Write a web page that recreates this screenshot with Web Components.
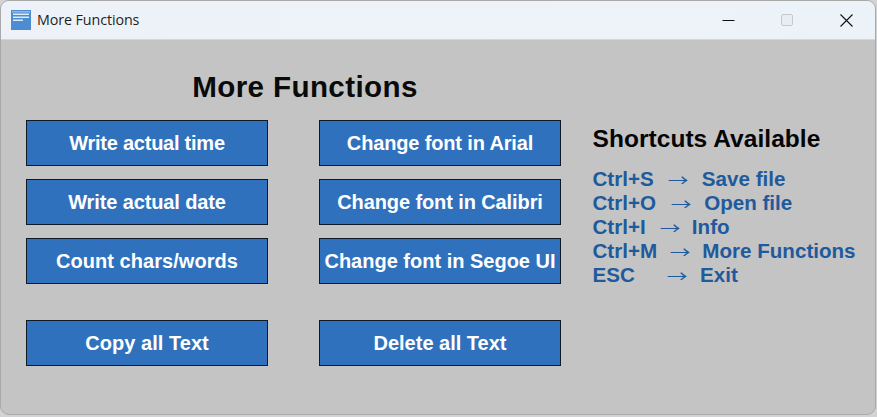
<!DOCTYPE html>
<html>
<head>
<meta charset="utf-8">
<title>More Functions</title>
<style>
    html, body { margin: 0; padding: 0; width: 877px; height: 417px; overflow: hidden; background: #d2d3d4; }
</style>
</head>
<body>
<app-window>
    <title-bar slot="bar" caption="More Functions"></title-bar>
    <functions-panel></functions-panel>
    <shortcuts-panel></shortcuts-panel>
</app-window>

<script>
// Outer window frame: title bar on top, content below
class AppWindow extends HTMLElement {
    constructor() {
        super();
        this.attachShadow({ mode: 'open' });
        this.shadowRoot.innerHTML = `
            <style>
                :host {
                    display: flex;
                    flex-direction: column;
                    box-sizing: border-box;
                    width: 876px;
                    height: 415px;
                    border: 1px solid #a9a9a9;
                    border-radius: 9px;
                    overflow: hidden;
                    background: #c4c4c4;
                }
                .content {
                    flex: 1;
                    display: flex;
                    padding: 29px 0 0 25px;
                    gap: 31.5px;
                }
            </style>
            <slot name="bar"></slot>
            <div class="content"><slot></slot></div>
        `;
    }
}

class TitleBar extends HTMLElement {
    constructor() {
        super();
        this.attachShadow({ mode: 'open' });
    }

    connectedCallback() {
        this.shadowRoot.innerHTML = `
            <style>
                :host {
                    display: flex;
                    align-items: center;
                    height: 38px;
                    flex: none;
                    background: linear-gradient(90deg, #eef2f8, #ecf3f8);
                    border-bottom: 1px solid #d4d6d8;
                    padding-left: 10px;
                    font: 14.3px "Open Sans", "Noto Sans", sans-serif;
                    color: #1f1f1f;
                }
                .icon { width: 20px; height: 20px; margin-right: 6px; margin-top: -1px; }
                .caption { flex: 1; margin-top: -1px; letter-spacing: -0.1px; }
                .controls { display: flex; height: 100%; margin-right: -1px; }
                .controls div { width: 59px; display: flex; align-items: center; justify-content: center; }
                .controls svg { width: 13px; height: 13px; }
            </style>
            <svg class="icon" viewBox="0 0 20 20">
                <rect width="20" height="20" fill="#4c8cd0"/>
                <rect x="1" y="1" width="18" height="1.5" fill="#8db8e4"/>
                <rect x="2" y="3.5" width="16" height="1.5" fill="#dce9f6"/>
                <rect x="2" y="6.5" width="16" height="1.5" fill="#dce9f6"/>
                <rect x="2" y="9.5" width="10" height="1.5" fill="#dce9f6"/>
            </svg>
            <span class="caption">${this.getAttribute('caption')}</span>
            <div class="controls">
                <div><svg viewBox="0 0 13 13"><path d="M0.5 6.5H12.5" stroke="#111" stroke-width="1"/></svg></div>
                <div><svg viewBox="0 0 13 13"><rect x="0.5" y="0.5" width="11" height="11" rx="1.5" fill="#e8edf2" stroke="#c6c9cc"/></svg></div>
                <div><svg viewBox="0 0 13 13"><path d="M0.5 0.5L12.5 12.5M12.5 0.5L0.5 12.5" stroke="#111" stroke-width="1.1"/></svg></div>
            </div>
        `;
    }
}

// One blue action button
class ActionButton extends HTMLElement {
    constructor() {
        super();
        this.attachShadow({ mode: 'open' });
        this.shadowRoot.innerHTML = `
            <style>
                :host {
                    display: flex;
                    align-items: center;
                    justify-content: center;
                    box-sizing: border-box;
                    width: 242px;
                    height: 46px;
                    background: #2f71bd;
                    border: 1px solid #0f1a26;
                    color: #fff;
                    font: bold 20px "Liberation Sans", Arial, sans-serif;
                    white-space: nowrap;
                }
            </style>
            <slot></slot>
        `;
    }
}

class FunctionsPanel extends HTMLElement {
    constructor() {
        super();
        this.attachShadow({ mode: 'open' });
        // label and letter spacing
        const labels = [
            ['Write actual time', -0.24], ['Change font in Arial', -0.15],
            ['Write actual date', -0.12], ['Change font in Calibri', -0.1],
            ['Count chars/words', 0.05], ['Change font in Segoe UI', 0],
            ['Copy all Text', 0.05], ['Delete all Text', 0]
        ];
        this.shadowRoot.innerHTML = `
            <style>
                :host { display: block; flex: none; width: 535px; }
                h1 {
                    margin: 0 0 15px;
                    padding-left: 23px;
                    height: 36px;
                    text-align: center;
                    font: bold 29.6px/35px "Liberation Sans", Arial, sans-serif;
                    letter-spacing: 0.38px;
                    color: #0a0a0a;
                }
                .grid {
                    display: grid;
                    grid-template-columns: 242px 242px;
                    column-gap: 51px;
                    grid-template-rows: 46px 46px 46px 46px;
                    row-gap: 13px;
                }
                action-button:nth-child(n+7) { margin-top: 23px; }
            </style>
            <h1>More Functions</h1>
            <div class="grid">
                ${labels.map(l => `<action-button style="letter-spacing:${l[1]}px">${l[0]}</action-button>`).join('')}
            </div>
        `;
    }
}

// Right hand list of keyboard shortcuts
class ShortcutsPanel extends HTMLElement {
    constructor() {
        super();
        this.attachShadow({ mode: 'open' });
        const rows = [
            ['Ctrl+S', 'Save file', 15.8, 16.3],
            ['Ctrl+O', 'Open file', 16.8, 15.3],
            ['Ctrl+I', 'Info', 15.8, 14.3],
            ['Ctrl+M', 'More Functions', 14.8, 14.3],
            ['ESC', 'Exit', 33.8, 15.3]
        ];
        this.shadowRoot.innerHTML = `
            <style>
                :host { display: block; font-family: "Liberation Sans", Arial, sans-serif; font-weight: bold; }
                h2 {
                    margin: 54px 0 12px;
                    font: bold 24.5px/32px "Liberation Sans", Arial, sans-serif;
                    letter-spacing: 0.05px;
                    color: #050505;
                }
                .row { font-size: 20.6px; line-height: 24px; color: #1f5a9c; white-space: nowrap; display: flex; }
                .arrow {
                    font: normal 16px/24px "Noto Sans CJK JP", sans-serif;
                    transform: scaleX(1.29);
                }
            </style>
            <h2>Shortcuts Available</h2>
            ${rows.map(r => `
                <div class="row">
                    <span>${r[0]}</span>
                    <span class="arrow" style="margin:0 ${r[3]}px 0 ${r[2]}px">→</span>
                    <span>${r[1]}</span>
                </div>`).join('')}
        `;
    }
}

customElements.define('action-button', ActionButton);
customElements.define('title-bar', TitleBar);
customElements.define('functions-panel', FunctionsPanel);
customElements.define('shortcuts-panel', ShortcutsPanel);
customElements.define('app-window', AppWindow);
</script>
</body>
</html>
